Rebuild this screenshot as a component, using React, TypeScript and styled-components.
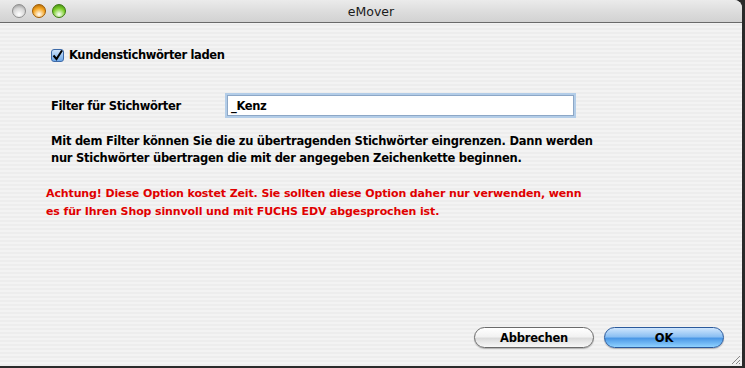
import React from "react";
import styled, { createGlobalStyle } from "styled-components";

const GlobalStyle = createGlobalStyle`
  html, body {
    margin: 0;
    padding: 0;
    background: #2a2a2a;
  }
  body {
    width: 745px;
    height: 368px;
    overflow: hidden;
    font-family: "DejaVu Sans", "Liberation Sans", sans-serif;
  }
`;

const Window = styled.div`
  width: 742px;
  height: 366px;
  display: flex;
  flex-direction: column;
  border-top-right-radius: 8px;
  overflow: hidden;
  background: repeating-linear-gradient(
    to bottom,
    #ededed 0px,
    #ededed 2px,
    #f3f3f3 2px,
    #f3f3f3 4px
  );
`;

const TitleBar = styled.div`
  height: 22px;
  flex-shrink: 0;
  display: flex;
  align-items: center;
  position: relative;
  background: linear-gradient(to bottom, #ebebeb 0%, #dcdcdc 55%, #d2d2d2 100%);
  border-bottom: 1px solid #6a6a6a;
`;

const Lights = styled.div`
  display: flex;
  gap: 6px;
  padding-left: 12px;
`;

const Light = styled.span<{ $tone: string; $edge: string }>`
  width: 14px;
  height: 14px;
  border-radius: 50%;
  border: 1px solid ${(p) => p.$edge};
  background: radial-gradient(circle at 50% 78%, #ffffff 0%, ${(p) => p.$tone} 55%, ${(p) => p.$edge} 100%);
  box-sizing: border-box;
`;

const Title = styled.div`
  position: absolute;
  left: 0;
  right: 0;
  text-align: center;
  font-size: 12.5px;
  color: #1a1a1a;
`;

const Content = styled.div`
  flex: 1;
  display: flex;
  flex-direction: column;
  padding: 24px 18px 0 51px;
  position: relative;
`;

const CheckRow = styled.label`
  display: flex;
  align-items: center;
  gap: 5px;
  height: 16px;
`;

const Box = styled.span`
  width: 13px;
  height: 13px;
  border-radius: 3px;
  border: 1px solid #3d6aa8;
  background: linear-gradient(to bottom, #cfe4fb, #6ea8e8);
  display: flex;
  align-items: center;
  justify-content: center;
  box-sizing: border-box;
`;

const BoldText = styled.span`
  font-size: 11.5px;
  font-weight: bold;
  color: #000;
  letter-spacing: -0.35px;
`;

const FilterRow = styled.div`
  display: flex;
  align-items: center;
  margin-top: 32px;
`;

const FilterLabel = styled(BoldText)`
  width: 176px;
`;

const Input = styled.div`
  width: 347px;
  height: 21px;
  box-sizing: border-box;
  background: #fff;
  border: 1px solid #8da7c6;
  box-shadow: 0 0 0 2px #b3cde8;
  display: flex;
  align-items: center;
  padding-left: 3px;
`;

const Paragraph = styled.p<{ $color?: string; $shift?: number; $size: number; $lead: number; $track: number }>`
  margin: 0;
  font-size: ${(p) => p.$size}px;
  font-weight: bold;
  line-height: ${(p) => p.$lead}px;
  letter-spacing: ${(p) => p.$track}px;
  color: ${(p) => p.$color || "#000"};
  margin-left: ${(p) => p.$shift || 0}px;
`;

const Note = styled(Paragraph)`
  margin-top: 17px;
`;

const Warning = styled(Paragraph)`
  margin-top: 18px;
`;

const Footer = styled.div`
  margin-top: auto;
  display: flex;
  justify-content: flex-end;
  gap: 10px;
  padding: 0 0 18px 0;
`;

const Button = styled.div<{ $primary?: boolean }>`
  width: 120px;
  height: 21px;
  box-sizing: border-box;
  border-radius: 11px;
  display: flex;
  align-items: center;
  justify-content: center;
  font-size: 11.5px;
  font-weight: bold;
  letter-spacing: -0.2px;
  color: #000;
  border: 1px solid ${(p) => (p.$primary ? "#2b5a9c" : "#6b6b6b")};
  background: ${(p) =>
    p.$primary
      ? "linear-gradient(to bottom, #cfe6fd 0%, #8dc0f3 45%, #4c98e6 55%, #8fd2ff 100%)"
      : "linear-gradient(to bottom, #ffffff 0%, #f2f2f2 45%, #dcdcdc 55%, #f8f8f8 100%)"};
  box-shadow: 0 1px 1px rgba(0, 0, 0, 0.25);
`;

const Grip = styled.svg`
  position: absolute;
  right: 1px;
  bottom: 1px;
`;

export default function App() {
  return (
    <>
      <GlobalStyle />
      <Window>
        <TitleBar>
          <Lights>
            <Light $tone="#d6d6d6" $edge="#8e8e8e" />
            <Light $tone="#f5a623" $edge="#a05a00" />
            <Light $tone="#7ccf2a" $edge="#3a7a10" />
          </Lights>
          <Title>eMover</Title>
        </TitleBar>
        <Content>
          <CheckRow>
            <Box>
              <svg width="11" height="11" viewBox="0 0 11 11">
                <path d="M1.5 5.5 L4.5 9 L10 0.5" fill="none" stroke="#000" strokeWidth="2" />
              </svg>
            </Box>
            <BoldText>Kundenstichwörter laden</BoldText>
          </CheckRow>
          <FilterRow>
            <FilterLabel>Filter für Stichwörter</FilterLabel>
            <Input>
              <BoldText>_Kenz</BoldText>
            </Input>
          </FilterRow>
          <Note $size={11.5} $lead={17} $track={-0.25}>
            Mit dem Filter können Sie die zu übertragenden Stichwörter eingrenzen. Dann werden
            <br />
            nur Stichwörter übertragen die mit der angegeben Zeichenkette beginnen.
          </Note>
          <Warning $color="#e00000" $shift={-5} $size={11} $lead={18} $track={-0.12}>
            Achtung! Diese Option kostet Zeit. Sie sollten diese Option daher nur verwenden, wenn
            <br />
            es für Ihren Shop sinnvoll und mit FUCHS EDV abgesprochen ist.
          </Warning>
          <Footer>
            <Button>Abbrechen</Button>
            <Button $primary>OK</Button>
          </Footer>
          <Grip width="12" height="12" viewBox="0 0 12 12">
            <path d="M11 3 L3 11 M11 7 L7 11 M11 10 L10 11" stroke="#888" strokeWidth="1" />
          </Grip>
        </Content>
      </Window>
    </>
  );
}
